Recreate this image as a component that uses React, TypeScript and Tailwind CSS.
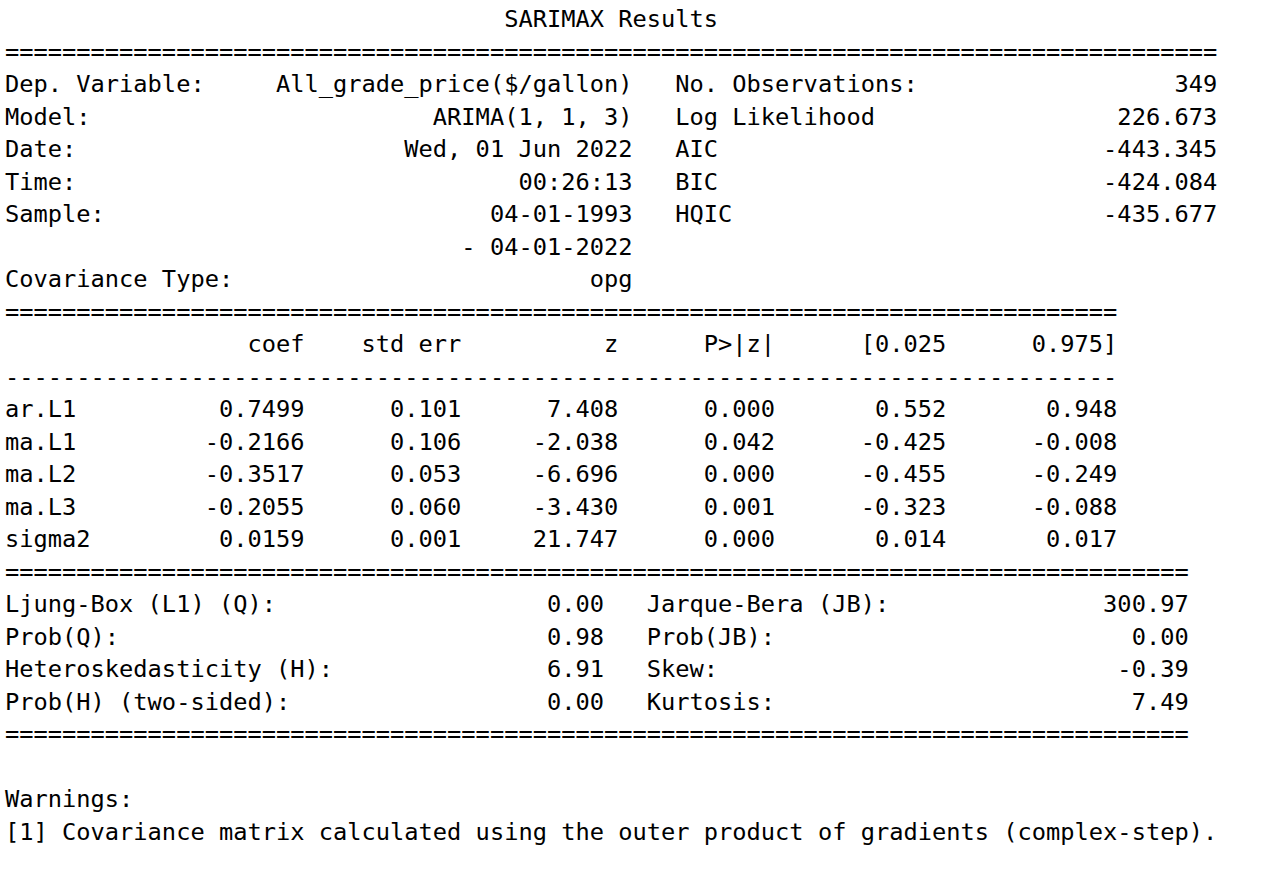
const pair = (l: string, lv: string, r: string, rv: string, lw: number, rw: number) =>
  l + lv.padStart(lw - l.length) + (r || rv ? '   ' + r + rv.padStart(rw - r.length) : '');

const params = [
  ['ar.L1', '0.7499', '0.101', '7.408', '0.000', '0.552', '0.948'],
  ['ma.L1', '-0.2166', '0.106', '-2.038', '0.042', '-0.425', '-0.008'],
  ['ma.L2', '-0.3517', '0.053', '-6.696', '0.000', '-0.455', '-0.249'],
  ['ma.L3', '-0.2055', '0.060', '-3.430', '0.001', '-0.323', '-0.088'],
  ['sigma2', '0.0159', '0.001', '21.747', '0.000', '0.014', '0.017'],
];

const colEnds = [21, 32, 43, 54, 66, 78];

const paramRow = (cells: string[]) => {
  let s = cells[0];
  cells.slice(1).forEach((c, i) => {
    s = s + c.padStart(colEnds[i] - s.length);
  });
  return s;
};

const lines = [
  ' '.repeat(35) + 'SARIMAX Results',
  '='.repeat(85),
  pair('Dep. Variable:', 'All_grade_price($/gallon)', 'No. Observations:', '349', 44, 38),
  pair('Model:', 'ARIMA(1, 1, 3)', 'Log Likelihood', '226.673', 44, 38),
  pair('Date:', 'Wed, 01 Jun 2022', 'AIC', '-443.345', 44, 38),
  pair('Time:', '00:26:13', 'BIC', '-424.084', 44, 38),
  pair('Sample:', '04-01-1993', 'HQIC', '-435.677', 44, 38),
  pair('', '- 04-01-2022', '', '', 44, 38),
  pair('Covariance Type:', 'opg', '', '', 44, 38),
  '='.repeat(78),
  paramRow(['', 'coef', 'std err', 'z', 'P>|z|', '[0.025', '0.975]']),
  '-'.repeat(78),
  ...params.map(paramRow),
  '='.repeat(83),
  pair('Ljung-Box (L1) (Q):', '0.00', 'Jarque-Bera (JB):', '300.97', 42, 38),
  pair('Prob(Q):', '0.98', 'Prob(JB):', '0.00', 42, 38),
  pair('Heteroskedasticity (H):', '6.91', 'Skew:', '-0.39', 42, 38),
  pair('Prob(H) (two-sided):', '0.00', 'Kurtosis:', '7.49', 42, 38),
  '='.repeat(83),
  '',
  'Warnings:',
  '[1] Covariance matrix calculated using the outer product of gradients (complex-step).',
];

export default function App() {
  return (
    <div className="min-h-screen bg-white pl-[5px] pt-[3px]">
      <pre className="font-['DejaVu_Sans_Mono',monospace] text-[23.7px] leading-[32.5px] text-black">
        {lines.join('\n')}
      </pre>
    </div>
  );
}
